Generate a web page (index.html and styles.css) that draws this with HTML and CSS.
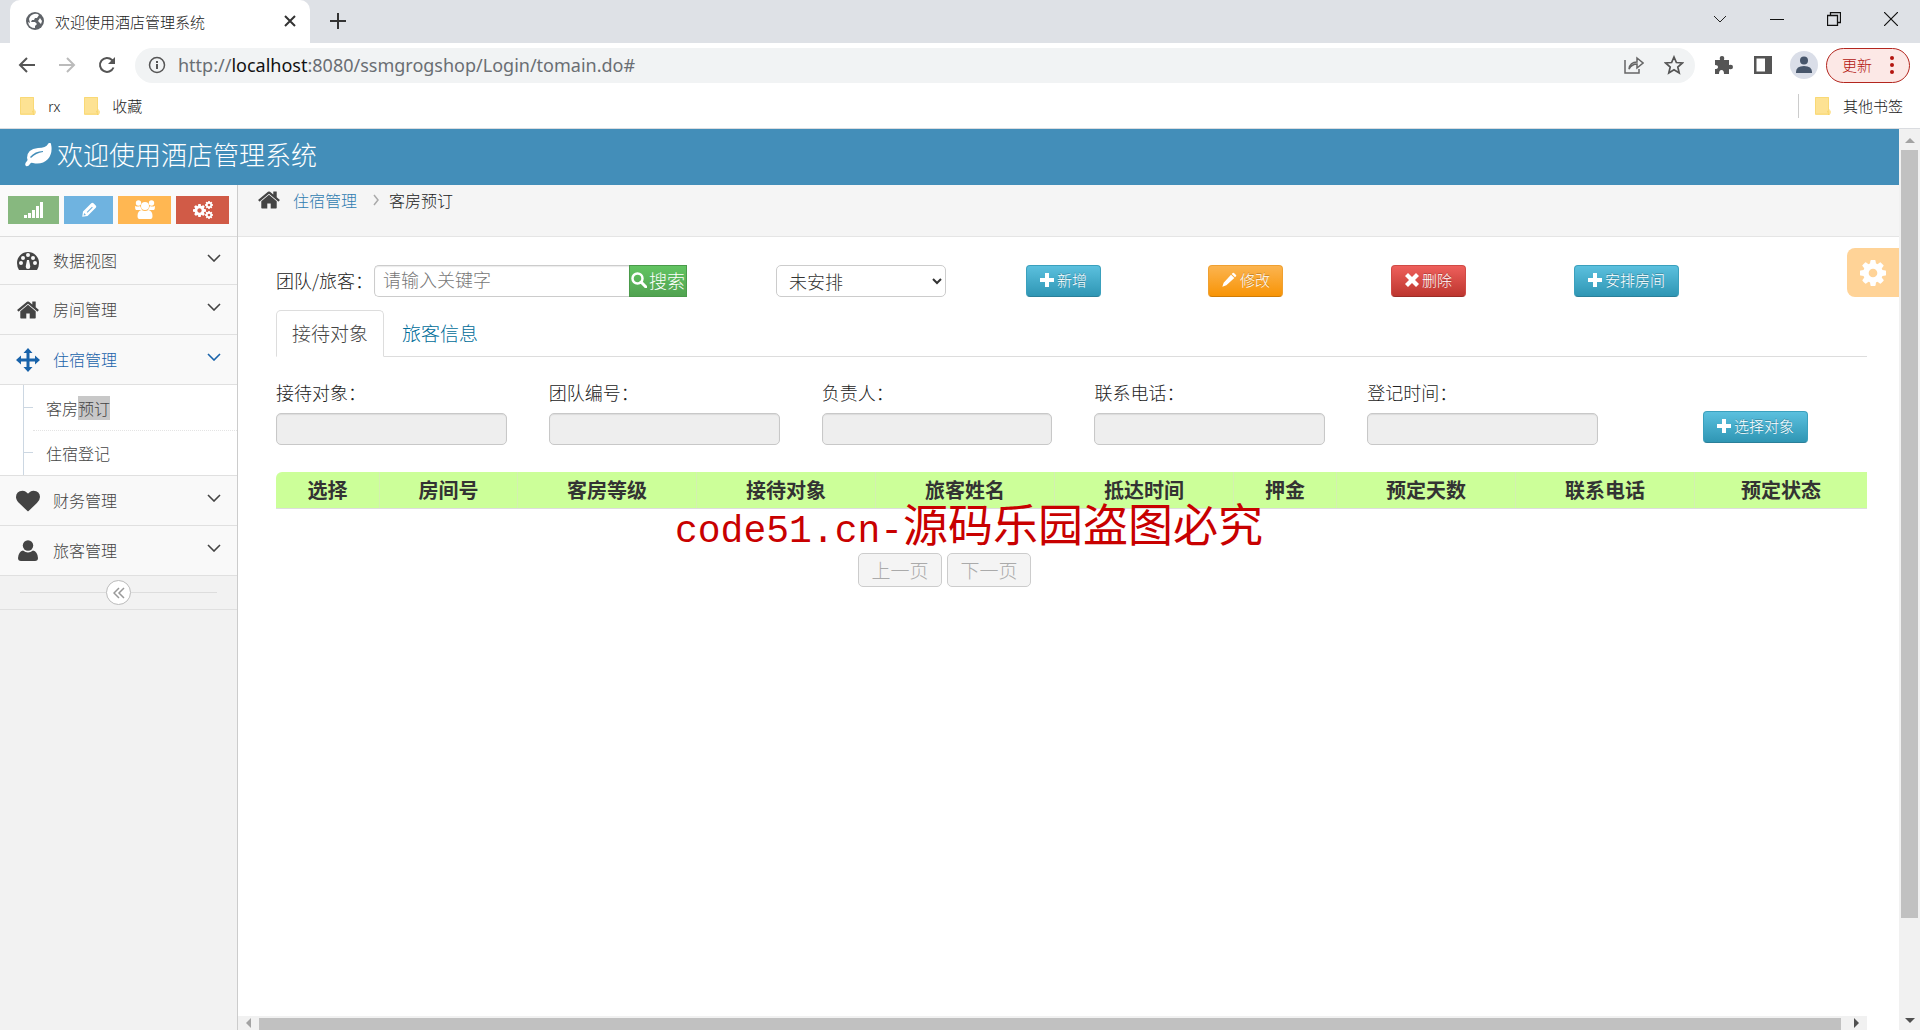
FILE: index.html
```html
<!DOCTYPE html>
<html lang="zh-CN">
<head>
<meta charset="utf-8">
<title>欢迎使用酒店管理系统</title>
<link rel="stylesheet" href="styles.css">
</head>
<body>
<svg class="defs" aria-hidden="true">
  <symbol id="home" viewBox="0 0 1792 1792"><path d="M1472 992v480q0 26-19 45t-45 19h-384v-384h-256v384h-384q-26 0-45-19t-19-45v-480q0-1 .5-3t.5-3l575-474 575 474q1 2 1 6zm223-69l-62 74q-8 9-21 11h-3q-13 0-21-7l-692-577-692 577q-12 8-24 7-13-2-21-11l-62-74q-8-10-7-23.500t11-21.500l719-599q32-26 76-26t76 26l244 204v-195q0-14 9-23t23-9h192q14 0 23 9t9 23v408l219 182q10 8 11 21.500t-7 23.500z"/></symbol>
  <symbol id="cog" viewBox="128 128 1536 1536"><path d="M1152 896q0-106-75-181t-181-75-181 75-75 181 75 181 181 75 181-75 75-181zm512-109v222q0 12-8 23t-20 13l-185 28q-19 54-39 91 35 50 107 138 10 12 10 25t-9 23q-27 37-99 108t-94 71q-12 0-26-9l-138-108q-44 23-91 38-16 136-29 186-7 28-36 28h-222q-14 0-24.500-8.500t-11.500-21.500l-28-184q-49-16-90-37l-141 107q-10 9-25 9-14 0-25-11-126-114-165-168-7-10-7-23 0-12 8-23 15-21 51-66.500t54-70.500q-27-50-41-99l-183-27q-13-2-21-12.500t-8-23.500v-222q0-12 8-23t19-13l186-28q14-46 39-92-40-57-107-138-10-12-10-24 0-10 9-23 26-36 98.500-107.500t94.500-71.500q13 0 26 10l138 107q44-23 91-38 16-136 29-186 7-28 36-28h222q14 0 24.500 8.500t11.500 21.500l28 184q49 16 90 37l142-107q9-9 24-9 13 0 25 10 129 119 165 170 7 8 7 22 0 12-8 23-15 21-51 66.500t-54 70.500q26 50 41 98l183 28q13 2 21 12.500t8 23.500z"/></symbol>
  <symbol id="heart" viewBox="0 0 1792 1792"><path d="M896 1664q-26 0-44-18l-624-602q-10-8-27.500-26t-55.500-65.500-68-97.500-53.500-121-23.500-138q0-220 127-344t351-124q62 0 126.500 21.500t120 58 95.500 68.500 76 68q36-36 76-68t95.500-68.500 120-58 126.500-21.500q224 0 351 124t127 344q0 221-229 450l-623 600q-18 18-44 18z"/></symbol>
  <symbol id="user" viewBox="0 0 24 24"><circle cx="12" cy="6.500" r="5.200"/><path d="M7 11.500q5 4 10 0 4.500 1 5 7.500 0 3-3 3H5q-3 0-3-3 .5-6.500 5-7.500z"/></symbol>
  <symbol id="pencil" viewBox="0 0 24 24"><path d="M2 22l2-6L15 4l5 5L8 20zM16 3l1.500-1.500q1-1 2 0l3 3q1 1 0 2L21 8z"/></symbol>
  <symbol id="marker" viewBox="0 0 24 24"><path fill-rule="evenodd" d="M3 21l1-7L15 3q1.500-1.500 3 0l3 3q1.500 1.500 0 3L10 20zM9 14.500l1 1 7-7-1-1zM5.500 16l-.7 3.200L8 18.500z"/></symbol>
  <symbol id="plus" viewBox="0 0 14 14"><path d="M5 0h4v5h5v4H9v5H5V9H0V5h5z"/></symbol>
  <symbol id="times" viewBox="0 0 14 14"><path d="M3 0l4 4 4-4 3 3-4 4 4 4-3 3-4-4-4 4-3-3 4-4-4-4z"/></symbol>
  <symbol id="search" viewBox="0 0 16 16"><circle cx="6.500" cy="6.500" r="5" fill="none" stroke="currentColor" stroke-width="2.500"/><path d="M10 10l5 5" stroke="currentColor" stroke-width="3" stroke-linecap="round"/></symbol>
  <symbol id="down" viewBox="0 0 14 8"><path d="M1 1l6 6 6-6" fill="none" stroke="currentColor" stroke-width="1.600"/></symbol>
  <symbol id="folder" viewBox="0 0 18 20"><path d="M2 1h13v13q2 0 2 2t-2 3H2q-1 0-1-1V2q0-1 1-1z" fill="#fde293"/><path d="M15 13q-2 2 0 6" fill="none" stroke="#f4c84a"/><path d="M1.500 1.500h13V18h-13z" fill="none" stroke="#f9d976"/></symbol>
</svg>

<div class="tabstrip">
  <div class="browser-tab">
    <svg class="i18" viewBox="0 0 18 18"><circle cx="9" cy="9" r="9" fill="#5f6368"/><path d="M8 2q3-1 5 1l-2 3H9L8 8H6L5 10h4l2 2-2 2v2q-6 0-7-6l2 1L3 7q1-4 5-5zM14 6l2 3-1 3-3-3z" fill="#fff"/></svg>
    <span class="browser-title">欢迎使用酒店管理系统</span>
    <button class="plain" aria-label="关闭标签页"><svg class="i12" viewBox="0 0 12 12"><path d="M1 1l10 10M11 1L1 11" stroke="#333" stroke-width="2"/></svg></button>
  </div>
  <button class="plain newtab" aria-label="新标签页"><svg class="i16" viewBox="0 0 16 16"><path d="M8 0v16M0 8h16" stroke="#333" stroke-width="2"/></svg></button>
  <div class="window-buttons">
    <button class="plain" aria-label="搜索标签页"><svg class="i14" viewBox="0 0 14 14"><path d="M1 4l6 6 6-6" fill="none" stroke="#222"/></svg></button>
    <button class="plain" aria-label="最小化"><svg class="i14" viewBox="0 0 14 14"><path d="M0 7.500h14" stroke="#111"/></svg></button>
    <button class="plain" aria-label="还原"><svg class="i14" viewBox="0 0 14 14"><path d="M.5 3.500h10v10H.5zM3.500 3V.5h10v10H11" fill="none" stroke="#111" stroke-width="1.300"/></svg></button>
    <button class="plain" aria-label="关闭"><svg class="i14" viewBox="0 0 14 14"><path d="M0 0l14 14M14 0L0 14" stroke="#111" stroke-width="1.200"/></svg></button>
  </div>
</div>

<div class="toolbar">
  <div class="nav-buttons">
    <button class="plain" aria-label="后退"><svg class="i18" viewBox="0 0 18 18"><path d="M17 9H2M9 2L2 9l7 7" fill="none" stroke="#555" stroke-width="2"/></svg></button>
    <button class="plain" aria-label="前进"><svg class="i18" viewBox="0 0 18 18"><path d="M1 9h15M9 2l7 7-7 7" fill="none" stroke="#bbb" stroke-width="2"/></svg></button>
    <button class="plain" aria-label="刷新"><svg class="i18" viewBox="0 0 18 18"><path d="M15.500 11.500A7 7 0 1 1 14 4l1.500 2" fill="none" stroke="#555" stroke-width="2"/><path d="M17 1v7h-7z" fill="#555"/></svg></button>
  </div>
  <div class="omnibox">
    <svg class="i18" viewBox="0 0 18 18"><circle cx="9" cy="9" r="7.500" fill="none" stroke="#555" stroke-width="1.500"/><path d="M9 8v5M9 5v2" stroke="#555" stroke-width="2"/></svg>
    <span class="url">http://<b>localhost</b>:8080/ssmgrogshop/Login/tomain.do#</span>
    <svg class="i20" viewBox="0 0 20 20"><path d="M1 5v13h14v-4M5 14q1-7 8-7V3l6 5-6 5V9q-5 0-8 5z" fill="none" stroke="#666" stroke-width="1.500"/></svg>
    <svg class="i20" viewBox="0 0 20 20"><path d="M10 2l2.400 5.500 6 .5-4.600 4 1.400 6-5.200-3.200L4.800 18l1.400-6L1.600 8l6-.5z" fill="none" stroke="#555" stroke-width="1.700"/></svg>
  </div>
  <div class="extras">
    <svg class="i20" viewBox="0 0 20 20"><path d="M2 5h5q-1-4 2-4t2 4h5v5q4-1 4 2t-4 2v5h-5q0-4-2.500-4T6 19H2v-5q3 0 3-2t-3-2z" fill="#555"/></svg>
    <svg class="i18" viewBox="0 0 18 18"><path fill-rule="evenodd" d="M0 0h18v18H0zM2.500 2.500v13H11v-13z" fill="#555"/></svg>
    <svg class="i28" viewBox="0 0 28 28"><circle cx="14" cy="14" r="14" fill="#dadee8"/><circle cx="14" cy="9.500" r="4" fill="#47566b"/><path d="M6 21q0-6 8-6t8 6v1H6z" fill="#47566b"/></svg>
    <button class="update">更新<svg class="dots" viewBox="0 0 4 18"><circle cx="2" cy="2" r="2"/><circle cx="2" cy="9" r="2"/><circle cx="2" cy="16" r="2"/></svg></button>
  </div>
</div>

<div class="bookmarks">
  <a href="#"><svg class="i20"><use href="#folder"/></svg>rx</a>
  <a href="#"><svg class="i20"><use href="#folder"/></svg>收藏</a>
  <a href="#" class="other"><svg class="i20"><use href="#folder"/></svg>其他书签</a>
</div>

<div class="viewport">
  <div class="page">
    <header class="navbar">
      <svg class="leaf" viewBox="0 0 28 24"><path fill-rule="evenodd" d="M27 1q2 9-3 15-6 6-15 4-2-1-3 1-2 3-4 2-2-2 1-5 1-1 0-3Q3 6 14 5q8 0 10-4 2-3 3 0zM7 15q5-5 12-6v-1Q11 8 6 14z" fill="#fff"/></svg>
      <h1>欢迎使用酒店管理系统</h1>
    </header>
    <div class="columns">
      <aside class="sidebar">
        <div class="shortcuts">
          <button class="green" aria-label="统计"><svg class="i20" viewBox="0 0 20 18"><path d="M0 14h3v3H0zM4 12h3v5H4zM8 9h3v8H8zM12 5h3v12h-3zM16 1h3v16h-3z"/></svg></button>
          <button class="blue" aria-label="编辑"><svg class="i18"><use href="#marker"/></svg></button>
          <button class="orange" aria-label="用户"><svg class="i20" viewBox="0 0 20 20"><circle cx="3.500" cy="3" r="2.700"/><circle cx="16.500" cy="3" r="2.700"/><circle cx="10" cy="6" r="4"/><path d="M0 6q3 1 5 0l2 4H1q-1-1-1-4zM20 6q-3 1-5 0l-2 4h6q1-1 1-4zM6.500 10q3.500 2 7 0 4 1 4 6 0 3-2 3h-11q-2 0-2-3 0-5 4-6z"/></svg></button>
          <button class="red" aria-label="设置"><svg class="i20" viewBox="0 0 20 18"><use href="#cog" x="0" y="3" width="13" height="13"/><use href="#cog" x="12" y="0" width="8" height="8"/><use href="#cog" x="12" y="10" width="8" height="8"/></svg></button>
        </div>
        <nav class="menu">
          <a href="#"><svg class="mi" viewBox="0 0 24 20"><path fill-rule="evenodd" d="M12 1a11 11 0 0 1 11 11q0 4-2 7H3q-2-3-2-7A11 11 0 0 1 12 1zM11 9l-1 5q-1 4 2 4t2-4l-1-5zM3 12a2 2 0 0 0 4 0 2 2 0 0 0-4 0zM17 12a2 2 0 0 0 4 0 2 2 0 0 0-4 0zM5 7a2 2 0 0 0 4 0 2 2 0 0 0-4 0zM15 7a2 2 0 0 0 4 0 2 2 0 0 0-4 0zM10 4a2 2 0 0 0 4 0 2 2 0 0 0-4 0z"/></svg><span>数据视图</span><svg class="chev"><use href="#down"/></svg></a>
          <a href="#"><svg class="mi"><use href="#home"/></svg><span>房间管理</span><svg class="chev"><use href="#down"/></svg></a>
          <a href="#" class="active"><svg class="mi" viewBox="0 0 24 24"><path d="M12 0l4.500 5h-3v5.500H19v-3l5 4.500-5 4.500v-3h-5.500V19h3L12 24l-4.500-5h3v-5.500H5v3L0 12l5-4.500v3h5.500V5h-3z"/></svg><span>住宿管理</span><svg class="chev"><use href="#down"/></svg></a>
          <ul>
            <li><a href="#">客房<mark>预订</mark></a></li>
            <li><a href="#">住宿登记</a></li>
          </ul>
          <a href="#"><svg class="mi"><use href="#heart"/></svg><span>财务管理</span><svg class="chev"><use href="#down"/></svg></a>
          <a href="#"><svg class="mi"><use href="#user"/></svg><span>旅客管理</span><svg class="chev"><use href="#down"/></svg></a>
        </nav>
        <div class="collapse"><button aria-label="收起菜单"><svg class="i12" viewBox="0 0 12 12"><path d="M6 1L1 6l5 5M11 1L6 6l5 5" fill="none" stroke="#999" stroke-width="1.500"/></svg></button></div>
      </aside>
      <main>
        <div class="breadcrumb">
          <svg class="crumb-home"><use href="#home"/></svg>
          <a href="#">住宿管理</a>
          <svg class="sep" viewBox="0 0 6 12"><path d="M1 1l4 5-4 5" fill="none" stroke="#aaa" stroke-width="1.500"/></svg>
          <span>客房预订</span>
        </div>
        <div class="content">
          <button class="settings" aria-label="界面设置"><svg class="i26"><use href="#cog"/></svg></button>
          <form class="filters">
            <div class="search">
              <label for="kw">团队/旅客：</label>
              <input id="kw" type="text" placeholder="请输入关键字">
              <button type="button" class="search-btn"><svg class="i16"><use href="#search"/></svg>搜索</button>
            </div>
            <select aria-label="安排状态"><option>未安排</option></select>
            <button type="button" class="btn info"><svg class="i14"><use href="#plus"/></svg>新增</button>
            <button type="button" class="btn warn"><svg class="i16"><use href="#pencil"/></svg>修改</button>
            <button type="button" class="btn danger"><svg class="i14"><use href="#times"/></svg>删除</button>
            <button type="button" class="btn info"><svg class="i14"><use href="#plus"/></svg>安排房间</button>
          </form>
          <div class="tabs">
            <a href="#" class="current">接待对象</a>
            <a href="#">旅客信息</a>
          </div>
          <form class="details">
            <div class="field"><label for="f1">接待对象：</label><input id="f1" type="text" readonly></div>
            <div class="field"><label for="f2">团队编号：</label><input id="f2" type="text" readonly></div>
            <div class="field"><label for="f3">负责人：</label><input id="f3" type="text" readonly></div>
            <div class="field"><label for="f4">联系电话：</label><input id="f4" type="text" readonly></div>
            <div class="field"><label for="f5">登记时间：</label><input id="f5" type="text" readonly></div>
            <button type="button" class="btn info"><svg class="i14"><use href="#plus"/></svg>选择对象</button>
          </form>
          <div class="results">
            <table>
              <colgroup><col class="c-pick"><col class="c-room"><col class="c-wide"><col class="c-wide"><col class="c-wide"><col class="c-wide"><col class="c-pick"><col class="c-wide"><col class="c-wide"><col></colgroup>
              <thead><tr><th>选择</th><th>房间号</th><th>客房等级</th><th>接待对象</th><th>旅客姓名</th><th>抵达时间</th><th>押金</th><th>预定天数</th><th>联系电话</th><th>预定状态</th></tr></thead>
            </table>
            <p class="watermark"><span class="latin">code51.cn-</span>源码乐园盗图必究</p>
          </div>
          <div class="pager">
            <button disabled>上一页</button>
            <button disabled>下一页</button>
          </div>
        </div>
        <div class="hscroll" aria-hidden="true"><i class="arrow left"></i><i class="thumb"></i><i class="arrow right"></i></div>
      </main>
    </div>
  </div>
  <div class="vscroll" aria-hidden="true"><i class="arrow up"></i><i class="thumb"></i><i class="space"></i><i class="arrow down"></i></div>
</div>
</body>
</html>
```
FILE: styles.css
```css
* { box-sizing: border-box; }
html { height: 100%; }
body {
  margin: 0;
  height: 100%;
  display: flex;
  flex-direction: column;
  overflow: hidden;
  background: #fff;
  color: #222;
  font: 300 16px/24px "Noto Sans CJK SC", "Noto Sans", sans-serif;
}
svg { display: block; flex: none; fill: currentColor; }
a { color: inherit; text-decoration: none; }
button, input, select { font: inherit; margin: 0; }
.defs { position: absolute; width: 0; height: 0; }
.plain { border: 0; padding: 0; background: none; display: block; }
.i12 { width: 12px; height: 12px; }
.i14 { width: 14px; height: 14px; }
.i16 { width: 16px; height: 16px; }
.i18 { width: 18px; height: 18px; }
.i20 { width: 20px; height: 20px; }
.i26 { width: 26px; height: 26px; }
.i28 { width: 28px; height: 28px; }

/* browser frame */
.tabstrip { flex: none; display: flex; height: 43px; background: #dee1e6; padding-left: 10px; }
.browser-tab {
  width: 300px;
  display: flex;
  align-items: center;
  padding: 0 14px 2px 16px;
  background: #fff;
  border-radius: 10px 10px 0 0;
  font-size: 15px;
  gap: 11px;
}
.browser-title { flex: 1; padding-top: 2px; }
.newtab { margin-left: 20px; padding-bottom: 2px; }
.window-buttons { margin-left: auto; display: flex; gap: 43px; align-items: center; padding: 0 22px 6px 0; }
.toolbar { flex: none; display: flex; height: 44px; align-items: center; padding: 0 10px 0 18px; }
.nav-buttons { display: flex; gap: 22px; width: 117px; }
.omnibox {
  flex: 1;
  display: flex;
  align-items: center;
  height: 35px;
  padding: 0 11px 0 13px;
  border-radius: 18px;
  background: #f1f3f4;
  gap: 20px;
}
.url { flex: 1; margin-left: -8px; font: 400 18px/24px "Noto Sans", sans-serif; color: #6a6e73; }
.url b { font-weight: 400; color: #111; }
.extras { display: flex; align-items: center; gap: 18px; padding-left: 18px; }
.extras .i18 { margin-left: 3px; }
.extras .i28 { margin-right: -10px; }
.update {
  display: flex;
  align-items: center;
  justify-content: space-between;
  width: 84px;
  height: 35px;
  padding: 0 15px;
  border: 1px solid #b3261e;
  border-radius: 18px;
  background: #fce8e6;
  color: #b3140f;
  font-size: 15px;
}
.dots { width: 4px; height: 18px; }
.bookmarks {
  flex: none;
  display: flex;
  align-items: center;
  height: 42px;
  padding: 0 17px 4px 18px;
  border-bottom: 1px solid #dadce0;
  font-size: 15px;
  gap: 22px;
}
.bookmarks a { display: flex; align-items: center; gap: 10px; }
.bookmarks .other { margin-left: auto; padding-left: 14px; border-left: 1px solid #ccc; }

/* scrollable page */
.viewport { flex: 1; display: flex; min-height: 0; }
.page { flex: 1; min-width: 0; display: flex; flex-direction: column; }
.vscroll { flex: none; width: 21px; display: flex; flex-direction: column; align-items: center; background: #f1f1f1; }
.vscroll .thumb { width: 17px; flex: 768; background: #c1c1c1; }
.vscroll .space { flex: 95; }
.arrow { flex: none; border: 5px solid transparent; }
.arrow.up { border-bottom-color: #a3a3a3; margin: 4px 0 7px; }
.arrow.down { border-top-color: #505050; margin: 5px 0 2px; }
.arrow.left { border-right-color: #a3a3a3; margin: 0 8px 0 3px; }
.arrow.right { border-left-color: #505050; margin: 0 3px 0 13px; }
.hscroll { flex: none; display: flex; align-items: center; height: 14px; margin-right: 32px; background: #f1f1f1; }
.hscroll .thumb { flex: 1; height: 12px; align-self: flex-end; background: #c1c1c1; }

.navbar { flex: none; display: flex; height: 56px; padding: 0 24px 4px; align-items: center; gap: 5px; background: #438eb9; color: #fff; }
.navbar h1 { margin: 0; padding-bottom: 2px; font: inherit; font-size: 26px; line-height: 40px; }
.leaf { width: 28px; height: 24px; }
.columns { flex: 1; display: flex; min-height: 0; }

.sidebar { flex: none; width: 238px; background: #f2f2f2; border-right: 1px solid #ccc; }
.shortcuts { display: flex; gap: 5px; height: 52px; padding: 11px 8px 12px; background: #fafafa; border-bottom: 1px solid #ddd; }
.shortcuts button { flex: 53; border: 0; padding: 0; height: 28px; color: #fff; display: flex; align-items: center; justify-content: center; }
.shortcuts .green { flex: 51; background: #87b87f; }
.shortcuts .blue { flex: 49; background: #6fb3e0; }
.orange { background: #ffb752; }
.red { background: #d15b47; }
.menu { color: #444; }
.menu > a { display: flex; align-items: center; height: 50px; padding: 0 16px; border-bottom: 1px solid #e0e0e0; background: #f9f9f9; }
.menu > a:first-child { height: 48px; }
.menu > a span { flex: 1; margin-left: 13px; padding-bottom: 2px; }
.menu .active { color: #1963aa; }
.menu .mi { width: 24px; height: 24px; }
.chev { width: 14px; height: 8px; margin-bottom: 6px; }
.menu ul { margin: 0; padding: 0; list-style: none; background: #fff; border-bottom: 1px solid #e0e0e0; }
.menu li { display: flex; align-items: center; height: 45px; margin-left: 23px; border-left: 1px solid #ccd7e2; }
.menu li::before { content: ""; width: 9px; border-top: 1px solid #ccd7e2; }
.menu li a { flex: 1; padding: 10px 0 10px 13px; }
.menu li + li a { border-top: 1px dotted #e4e4e4; }
mark { background: #c8c8c8; color: inherit; }
.collapse { display: flex; align-items: center; padding: 4px 20px; height: 34px; border-bottom: 1px solid #e0e0e0; }
.collapse::before, .collapse::after { content: ""; flex: 1; border-top: 1px solid #ddd; }
.collapse button { width: 25px; height: 25px; border: 1px solid #bbb; border-radius: 50%; background: #fff; display: flex; align-items: center; justify-content: center; padding: 0; }

main { flex: 1; min-width: 0; display: flex; flex-direction: column; }
.breadcrumb { flex: none; display: flex; align-items: center; height: 52px; padding: 0 20px 22px 19px; background: #f5f5f5; border-bottom: 1px solid #e5e5e5; }
.breadcrumb a { color: #2f7cb0; margin-right: 16px; }
.crumb-home { width: 24px; height: 24px; margin-right: 12px; color: #444; }
.sep { width: 6px; height: 12px; margin-right: 10px; }
.content { flex: 1; position: relative; padding: 28px 32px 0 38px; }
.settings {
  position: absolute;
  right: 0;
  top: 11px;
  width: 52px;
  height: 49px;
  padding: 0 0 0 13px;
  border: 0;
  border-radius: 8px 0 0 8px;
  background: #ffd397;
  color: #fff;
}

.filters { display: grid; grid-template-columns: 500fr 250fr 182fr 183fr 183fr 293fr; align-items: center; justify-items: start; }
.search { display: flex; align-items: center; font-size: 18px; }
.search label { width: 98px; padding-bottom: 2px; white-space: nowrap; }
input[type="text"] { height: 32px; border: 1px solid #ccc; border-radius: 5px; padding: 0 9px 4px 8px; box-shadow: inset 0 1px 1px rgba(0, 0, 0, .08); }
input::placeholder { color: #777; opacity: 1; }
.search input[type="text"] { width: 255px; border-right: 0; border-radius: 5px 0 0 5px; }
.search-btn {
  display: flex;
  align-items: center;
  justify-content: center;
  gap: 2px;
  width: 58px;
  height: 32px;
  padding: 0 0 3px;
  border: 1px solid #4a9a4a;
  background: linear-gradient(#62c462, #51a351);
  color: #fff;
}
select {
  width: 170px;
  height: 32px;
  padding: 0 0 0 8px;
  border: 1px solid #ccc;
  border-radius: 5px;
  background: #fff;
  color: #333;
  font-size: 18px;
  line-height: 24px;
}
.btn {
  display: flex;
  align-items: center;
  gap: 3px;
  height: 32px;
  padding: 0 13px 2px;
  border: 1px solid;
  border-radius: 4px;
  color: #fff;
  font-size: 15px;
  text-shadow: 0 -1px 0 rgba(0, 0, 0, .25);
}
.info { background: linear-gradient(#5bc0de, #2f96b4); border-color: #3aa0bd #3aa0bd #2a7f99; }
.warn { background: linear-gradient(#fbb450, #f89406); border-color: #f0a030 #f0a030 #d07c05; padding: 0 12px 2px; }
.danger { background: linear-gradient(#ee5f5b, #bd362f); border-color: #d04a45 #d04a45 #9c2c26; }

.tabs { display: flex; margin-top: 13px; height: 47px; border-bottom: 1px solid #ddd; color: #006d99; font-size: 19px; }
.tabs a { height: 47px; padding: 10px 15px; border: 1px solid transparent; margin-right: 2px; }
.tabs .current { background: #fff; border-color: #ddd #ddd #fff; border-radius: 5px 5px 0 0; color: #444; }

.details { display: grid; grid-template-columns: repeat(5, 273fr) 227fr; margin-top: 23px; align-items: end; }
.field { display: flex; flex-direction: column; gap: 9px; padding-right: 42px; font-size: 18px; }
.field input[type="text"] { width: 100%; background: #eee; border-color: #c8c8c8; }
.details .btn { justify-self: center; margin: 0 0 2px 4px; }

.results { position: relative; margin-top: 27px; }
table { width: 100%; table-layout: fixed; border-collapse: separate; border-spacing: 0; border-radius: 6px 0 0 0; overflow: hidden; border-bottom: 1px solid #ddd; }
.c-pick { width: 103px; }
.c-room { width: 138px; }
.c-wide { width: 179px; }
th { height: 36px; padding: 0; background: #cf9; border-left: 1px solid #d3f0b0; color: #333; font-size: 20px; font-weight: 700; line-height: 28px; }
th:first-child { border-left: 0; }
.watermark {
  position: absolute;
  top: 28px;
  left: 399px;
  margin: 0;
  color: #c80000;
  font-size: 45px;
  font-weight: 400;
  line-height: 46px;
  white-space: nowrap;
}
.latin { font-family: "Liberation Mono", monospace; font-size: 38px; }
.pager { display: flex; justify-content: center; gap: 5px; margin: 44px 254px 0 0; }
.pager button { width: 84px; height: 34px; padding: 0; border: 1px solid #ccc; border-radius: 5px; background: #f4f4f4; color: #aaa; font-size: 19px; }
```
